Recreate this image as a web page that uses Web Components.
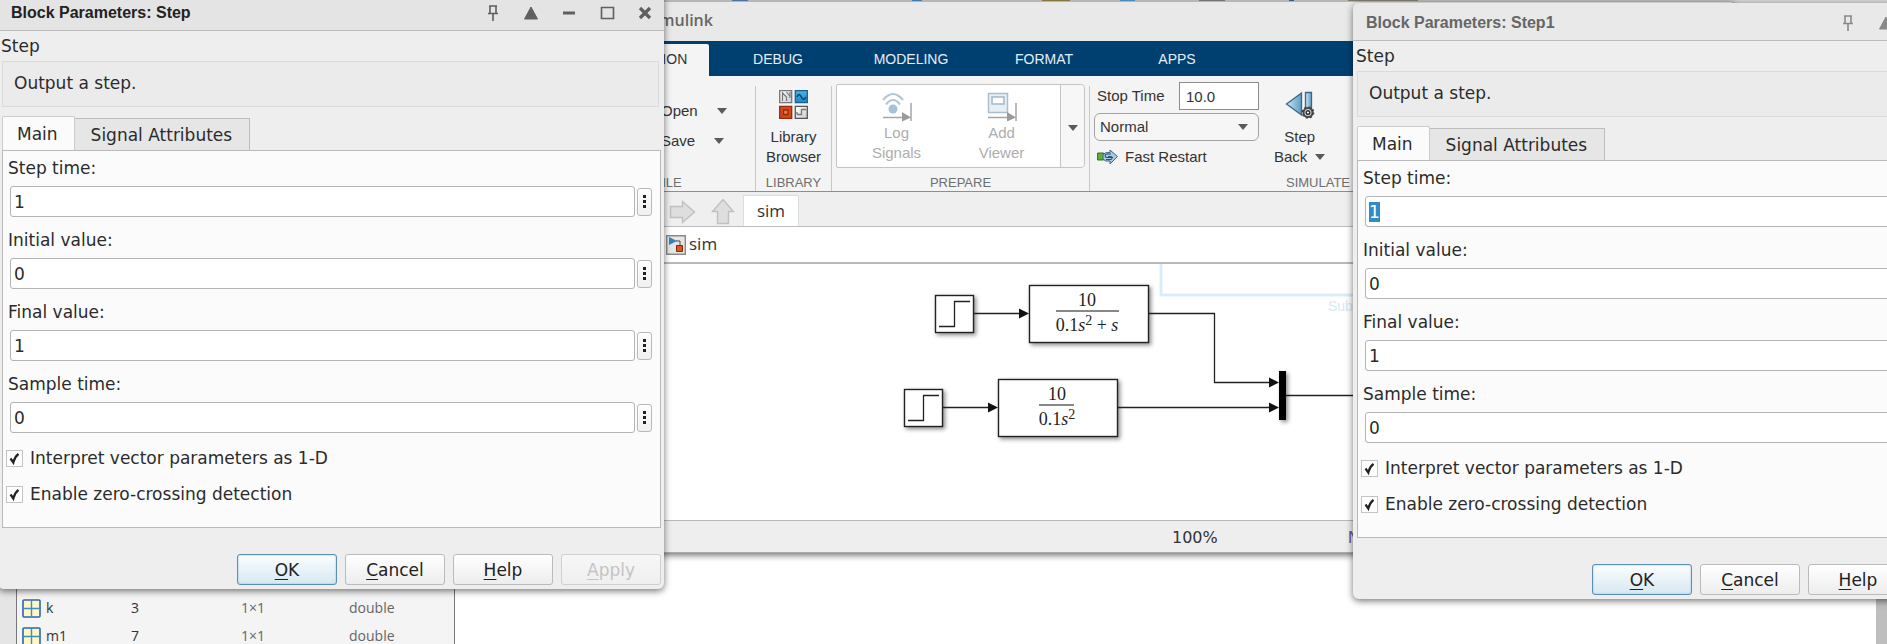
<!DOCTYPE html>
<html lang="en">
<head>
<meta charset="utf-8">
<title>Simulink desktop</title>
<style>
html, body { margin: 0; height: 100%; overflow: hidden; background: #fff; }
</style>
</head>
<body>
<desk-top>
  <matlab-base slot="base"></matlab-base>
  <simulink-window></simulink-window>
  <block-dialog class="left" heading="Block Parameters: Step" active></block-dialog>
  <block-dialog class="right" heading="Block Parameters: Step1" select-first></block-dialog>
</desk-top>

<script>
function define(name, html, setup) {
  const tpl = document.createElement('template');
  tpl.innerHTML = html;
  customElements.define(name, class extends HTMLElement {
    constructor() {
      super();
      this.attachShadow({ mode: 'open' }).append(tpl.content.cloneNode(true));
    }
    connectedCallback() { if (setup) setup(this, this.shadowRoot); }
  });
}

/* ---------- parts of the parameter dialog ---------- */

define('param-field', `
<style>
  :host { display: block; margin-bottom: 11px; }
  label { display: block; height: 30px; line-height: 24px; padding-left: 5px; }
  .row { display: flex; align-items: center; gap: 2px; padding: 0 8px 0 7px; }
  input { flex: 1; min-width: 0; height: 31px; box-sizing: border-box; border: 1px solid #b4b4b4; border-radius: 3px;
    padding: 0 3px; background: #fff; font: inherit; color: inherit; outline: none; }
  input::selection { background: #308cc6; color: #fff; }
  button { width: 15px; height: 28px; padding: 0; border: 1px solid #b9b9b9; border-radius: 3px;
    background: linear-gradient(#fdfdfd, #f0f0f0); display: grid; place-items: center; }
</style>
<label for="v"></label>
<div class="row">
  <input id="v" type="text">
  <button type="button" aria-label="More options"><svg width="3" height="13" viewBox="0 0 3 13"><path d="M0 0h3v3H0zM0 5h3v3H0zM0 10h3v3H0z" fill="#222"/></svg></button>
</div>`, (host, root) => {
  root.querySelector('label').textContent = host.getAttribute('label');
  root.querySelector('input').value = host.getAttribute('value');
});

define('param-check', `
<style>
  :host { display: block; height: 36px; }
  label { display: flex; align-items: center; gap: 7px; height: 24px; padding-left: 3px; }
  input { appearance: none; margin: 0; width: 17px; height: 17px; box-sizing: border-box; border: 1px solid #c4c4c4; background: #fff; }
  input:checked { background: #fff url('data:image/svg+xml,<svg xmlns="http://www.w3.org/2000/svg" viewBox="0 0 15 15"><path d="M3.5 7.5 6.3 11.5Q7.5 6 11.5 2.8" fill="none" stroke="%23222" stroke-width="2.2"/></svg>') center / 15px 15px no-repeat; }
</style>
<label><input type="checkbox" checked><slot></slot></label>`);

define('push-button', `
<style>
  :host { display: block; }
  button { width: 100px; height: 31px; padding: 0; border: 1px solid #bbb; border-radius: 3px; font: inherit; color: #222;
    background: linear-gradient(#fff, #ededed); text-underline-offset: 3px; }
  :host([default]) button { border-color: #5b8fb5; background: linear-gradient(#fbfdfe, #d7e8f2); box-shadow: inset 0 0 2px #8bb9d8; }
  :host([disabled]) button { border-color: #d0d0d0; color: #c4c4c4; background: linear-gradient(#f7f7f7, #efefef); }
</style>
<button type="button"><slot></slot></button>`, (host, root) => {
  if (host.hasAttribute('disabled')) root.querySelector('button').disabled = true;
});

define('title-bar', `
<style>
  :host { display: flex; align-items: center; height: 38px; box-sizing: border-box; border-bottom: 1px solid #bcbcbc;
    background: #e9e9e9; border-radius: 6px 6px 0 0; color: #666; --glyph: #8a8a8a;
    font: bold 16px/20px "Liberation Sans", Arial, sans-serif; }
  :host([active]) { background: #e4e4e4; color: #222; --glyph: #5f5f5f; }
  .t { flex: 1; padding: 2px 0 0 13px; white-space: nowrap; }
  button { width: 38px; height: 30px; padding: 2px 0 0; border: 0; background: none; color: var(--glyph); display: grid; place-items: center; }
  svg { display: block; fill: none; stroke: currentColor; stroke-width: 2; }
</style>
<div class="t"><slot></slot></div>
<button aria-label="Pin"><svg width="18" height="18"><path d="M5 2h8M6 2v7M12 2v7M4 9.500h10M9 10v7" stroke-width="1.600"/></svg></button>
<button aria-label="Shade"><svg width="18" height="18"><path d="M9 3 15.5 15h-13z" fill="currentColor" stroke-width="1"/></svg></button>
<button aria-label="Minimize"><svg width="18" height="18"><path d="M3 9h12" stroke-width="3"/></svg></button>
<button aria-label="Maximize"><svg width="18" height="18"><path d="M3.5 3.5h12v11h-12z" stroke-width="1.600"/></svg></button>
<button aria-label="Close"><svg width="18" height="18"><path d="m4 4 10 10M14 4 4 14" stroke-width="3.200"/></svg></button>`);

define('block-dialog', `
<style>
  :host { display: flex; flex-direction: column; width: 666px; border-radius: 6px; background: #eee; color: #2b2b2b;
    font: 17px/20px "DejaVu Sans", Verdana, sans-serif; box-shadow: 0 2px 7px rgba(0,0,0,.55); }
  .kind { height: 30px; line-height: 30px; padding-left: 3px; }
  .info { margin: 0 5px 0 4px; height: 44px; line-height: 43px; padding-left: 11px; border: 1px solid #dadada; background: #ebebeb; }
  .tabs { display: flex; align-items: flex-end; margin: 9px 0 0 4px; height: 34px; }
  .tabs button { height: 32px; padding: 0 17px 0 16px; border: 1px solid #bdbdbd; border-bottom: 0; border-left: 0; background: #e6e6e6; font: inherit; color: inherit; }
  .tabs button.on { height: 35px; padding: 0 16px 0 14px; margin-bottom: -1px; border-color: #ccc; border-left: 1px solid #ccc; background: #fbfbfb; border-radius: 2px 2px 0 0; }
  .panel { margin: 0 3px 0 4px; border: 1px solid #b9b9b9; background: #fbfbfb; padding: 5px 0 9px; }
  .checks { padding-top: 2px; }
  .foot { display: flex; justify-content: flex-end; gap: 8px; padding: 26px 3px 4px 0; }
</style>
<title-bar></title-bar>
<div class="kind">Step</div>
<div class="info">Output a step.</div>
<div class="tabs" role="tablist">
  <button class="on" role="tab">Main</button><button role="tab">Signal Attributes</button>
</div>
<div class="panel">
  <param-field label="Step time:" value="1"></param-field>
  <param-field label="Initial value:" value="0"></param-field>
  <param-field label="Final value:" value="1"></param-field>
  <param-field label="Sample time:" value="0"></param-field>
  <div class="checks">
    <param-check>Interpret vector parameters as 1-D</param-check>
    <param-check>Enable zero-crossing detection</param-check>
  </div>
</div>
<div class="foot">
  <push-button default><u>O</u>K</push-button>
  <push-button><u>C</u>ancel</push-button>
  <push-button><u>H</u>elp</push-button>
  <push-button disabled><u>A</u>pply</push-button>
</div>`, (host, root) => {
  const bar = root.querySelector('title-bar');
  bar.textContent = host.getAttribute('heading');
  bar.toggleAttribute('active', host.hasAttribute('active'));
  if (host.hasAttribute('select-first')) {
    const input = root.querySelector('param-field').shadowRoot.querySelector('input');
    input.focus({ preventScroll: true });
    input.select();
  }
});

/* ---------- parts of the Simulink window ---------- */

define('ribbon-tab', `
<style>
  :host { display: block; width: 128px; }
  button { display: block; width: 100%; height: 35px; padding: 0; border: 0; background: none; color: #e6eef5;
    font: 14px/16px "Liberation Sans", Arial, sans-serif; }
  :host([on]) button { background: #f4f4f4; color: #333; height: 32px; margin-top: 3px; border-radius: 2px 2px 0 0; padding-bottom: 3px; }
</style>
<button type="button"><slot></slot></button>`);

define('ribbon-group', `
<style>
  :host { display: flex; flex-direction: column; box-sizing: border-box; padding: 0 5px; border-left: 1px solid #c8c8c8; }
  .body { flex: 1; }
  .name { height: 18px; text-align: center; font-size: 13px; line-height: 20px; color: #6e6e6e; }
</style>
<div class="body"><slot></slot></div>
<div class="name"></div>`, (host, root) => {
  root.querySelector('.name').textContent = host.getAttribute('name');
});

define('tool-button', `
<style>
  :host { display: block; }
  button { display: flex; flex-direction: column; align-items: center; gap: 8px; padding: 0; border: 0; background: none;
    font: inherit; color: #333; white-space: nowrap; text-align: center; width: 100%; }
  :host([off]) button { color: #adadad; gap: 1px; }
</style>
<button type="button"><slot name="icon"></slot><span><slot></slot></span></button>`);

const caret = '<svg class="caret" width="10" height="6" viewBox="0 0 10 6"><path d="M0 0h10L5 6z" fill="#5a5a5a"/></svg>';

define('model-canvas', `
<style>
  :host { display: block; height: 256px; background: #fff; overflow: hidden; }
  svg { display: block; width: 100%; height: 256px; }
  .b { fill: #fff; stroke: #222; stroke-width: 1.4; filter: drop-shadow(2px 2px 2px rgba(0,0,0,.45)); }
  .w { fill: none; stroke: #222; stroke-width: 1.3; }
  text { font: 18px "Liberation Serif", "Times New Roman", serif; fill: #222; text-anchor: middle; }
  .i { font-style: italic; }
  .sup { font-size: 14px; }
</style>
<svg role="img" aria-label="Model">
 <g transform="translate(-560 -264)">
  <path d="M1161 262v33h300" fill="none" stroke="#d9edf9" stroke-width="3"/>
  <text x="1328" y="311" style="font:14px 'Liberation Sans',sans-serif;fill:#d6e9f6;text-anchor:start">Sub</text>
  <rect class="b" x="935.5" y="295.5" width="38" height="37"/>
  <path class="w" d="M939 326.500h15.500v-25H970"/>
  <rect class="b" x="1029.500" y="285.500" width="119" height="57"/>
  <rect class="b" x="904.500" y="389.500" width="38" height="37"/>
  <path class="w" d="M908 420.500h15.500v-25H939"/>
  <rect class="b" x="998.500" y="379.500" width="119" height="57"/>
  <path class="w" d="M974 313.500h46M1149 313.500h65.500v69H1270M943 407.500h46M1118 407.500h152M1286 395.500h80"/>
  <path d="m1019 308.500 10 5-10 5zM1269 377.500l10 5-10 5zM988 402.500l10 5-10 5zM1269 402.500l10 5-10 5z" fill="#111"/>
  <rect x="1279" y="371" width="7" height="49" style="filter:drop-shadow(2px 2px 2px rgba(0,0,0,.45))"/>
  <path d="M1056 311h63M1039 405h35" stroke="#888" stroke-width="2"/>
  <text x="1087" y="306">10</text>
  <text x="1087" y="331">0.1<tspan class="i">s</tspan><tspan class="sup" dy="-6">2</tspan><tspan dy="6"> + </tspan><tspan class="i">s</tspan></text>
  <text x="1057" y="400">10</text>
  <text x="1057" y="425">0.1<tspan class="i">s</tspan><tspan class="sup" dy="-6">2</tspan></text>
 </g>
</svg>`);

define('simulink-window', `
<style>
  :host { display: block; background: #efefef; color: #333; border-top: 1px solid #b5b5b5; border-radius: 0 6px 0 0;
    font: 15px/20px "Liberation Sans", Arial, sans-serif; box-shadow: 0 2px 7px rgba(0,0,0,.6); }
  .title { height: 39px; line-height: 36px; padding-left: 86px; background: #e9e9e9; border-radius: 0 6px 0 0; color: #666;
    font-family: "Open Sans", "Noto Sans", sans-serif; font-weight: 600; font-size: 16px; }
  .tabs { display: flex; gap: 5px; height: 35px; padding-left: 21px; background: #004070; }
  .ribbon { display: flex; height: 115px; background: #f4f4f4; border-bottom: 1px solid #8e8e8e; padding-left: 21px; }
  ribbon-group { margin-top: 10px; }
  .file { width: 174px; border: 0; }
  .lib { width: 76px; }
  .prep { width: 258px; }
  .sim { width: 458px; }
  .menu { display: flex; align-items: center; gap: 19px; height: 30px; padding: 0 0 0 75px; margin: 0; border: 0; background: none; font: inherit; color: inherit; }
  .file .menu:first-child { margin-top: 10px; }
  .lib tool-button { padding-top: 4px; }
  .gallery { display: flex; height: 82px; margin: -2px 0 0 -1px; width: 247px; border: 1px solid #c4c4c4; border-radius: 2px 4px 4px 2px; background: #fff; }
  .gallery tool-button { width: 105px; padding-top: 7px; }
  .gallery tool-button:first-child { margin-left: 7px; }
  .more { margin: 0 0 0 auto; width: 24px; padding: 0; border: 0; border-left: 1px solid #c4c4c4; background: #f7f7f7; border-radius: 0 4px 4px 0; }
  .sim { padding-left: 4px; }
  .simrow { display: flex; gap: 15px; }
  .opts { display: grid; grid-template-columns: 85px 80px; row-gap: 3px; margin-top: -4px; }
  .opts label { padding-left: 3px; line-height: 28px; }
  .opts input { height: 28px; box-sizing: border-box; border: 1px solid #8c8c8c; padding: 0 6px; background: #fff; font: inherit; color: inherit; min-width: 0; width: 80px; }
  .sel { grid-column: 1 / 3; display: grid; align-items: center; }
  .sel > * { grid-area: 1 / 1; }
  .sel svg { justify-self: end; margin-right: 11px; pointer-events: none; }
  select { appearance: none; height: 28px; border: 1px solid #a2a2a2; border-radius: 6px; background: #f6f6f6; padding: 0 5px; font: inherit; color: inherit; }
  .fast { grid-column: 1 / 3; display: flex; align-items: center; gap: 7px; padding: 0 0 0 3px; border: 0; background: none; font: inherit; color: inherit; height: 26px; }
  .back { padding-top: 5px; }
  .back .caret { margin-left: 8px; vertical-align: 2px; }
  .nav { display: flex; align-items: flex-end; height: 34px; padding-left: 109px; background: #efefef; border-bottom: 1px solid #bdbdbd; }
  .nav svg { margin-right: 14px; }
  .nav svg + svg { margin-right: 8px; }
  .nav .doc { width: 56px; height: 31px; padding: 0; border: 1px solid #ddd; border-bottom: 0; background: #fff; color: #333; }
  .doc, .crumb { font: 17px/20px "Open Sans", "Noto Sans", sans-serif; }
  .crumb { display: flex; align-items: center; gap: 3px; height: 35px; padding-left: 106px; background: #fff; border-bottom: 2px solid #b9b9b9; }
  .crumb span { padding-bottom: 2px; }
  .status { display: flex; height: 31px; border-top: 1px solid #b9b9b9; border-bottom: 1px solid #aaa; background: #eee; padding-left: 612px;
    font: 16px/34px "DejaVu Sans", sans-serif; gap: 130px; }
  .status .mode { color: #6a5aa0; }
</style>
<div class="title">Simulink</div>
<div class="tabs">
  <ribbon-tab on>SIMULATION</ribbon-tab><ribbon-tab>DEBUG</ribbon-tab><ribbon-tab>MODELING</ribbon-tab><ribbon-tab>FORMAT</ribbon-tab><ribbon-tab>APPS</ribbon-tab>
</div>
<div class="ribbon">
  <ribbon-group class="file" name="FILE">
    <button class="menu">Open ${caret}</button>
    <button class="menu">Save ${caret}</button>
  </ribbon-group>
  <ribbon-group class="lib" name="LIBRARY">
    <tool-button>
      <svg slot="icon" width="29" height="29" viewBox="0 0 29 29">
        <defs><linearGradient id="s" x2="1" y2="1"><stop stop-color="#fff"/><stop offset="1" stop-color="#c9ccd2"/></linearGradient>
        <linearGradient id="bl" y2="1" x2="0"><stop stop-color="#4db4e6"/><stop offset="1" stop-color="#1787c4"/></linearGradient></defs>
        <path d="M.7.700h12v12H.7z" fill="url(#s)" stroke="#777" stroke-width="1.300"/>
        <path d="M3.500 2v9M3.500 3l4 4v4M7.500 2l4 5M11 2v6" fill="none" stroke="#777" stroke-width="1.200"/>
        <path d="M16.300.700h12v12h-12z" fill="url(#bl)" stroke="#17618e" stroke-width="1.300"/>
        <path d="M18 7q2-5 4.300 0t4.500 0" fill="none" stroke="#0d3d63" stroke-width="1.400"/>
        <path d="M.7 16.300h12v12H.7z" fill="#d9461b" stroke="#8e2c10" stroke-width="1.300"/>
        <path d="M4.500 20h4.500v4.500H4.500z" fill="#f3793f" stroke="#8e2c10" stroke-width="1.300"/>
        <path d="M16.300 16.300h12v12h-12z" fill="url(#s)" stroke="#555" stroke-width="1.300"/>
        <path d="M18 24.500h4.500v-5H27M18 22v2.500" fill="none" stroke="#777" stroke-width="1.300"/>
      </svg>Library<br>Browser</tool-button>
  </ribbon-group>
  <ribbon-group class="prep" name="PREPARE">
    <div class="gallery">
      <tool-button off>
        <svg slot="icon" width="30" height="30" viewBox="0 0 30 30"><g fill="none" stroke="#b3c7d4" stroke-width="2.200"><path d="M1 8Q11-4 21 8M4 12.500Q11 3.500 18 12.500"/></g><circle cx="11" cy="17" r="4.500" fill="#a4c3d8"/><path d="M1 25.500h20M29 11v18" stroke="#a5a5a5" stroke-width="1.500"/><path d="m20 20 9 5.500-9 4z" fill="#9b9b9b"/></svg>Log<br>Signals</tool-button>
      <tool-button off>
        <svg slot="icon" width="30" height="30" viewBox="0 0 30 30"><path d="M1.500 1.500h19v19h-19z" fill="#e8eff4" stroke="#a9bfd0" stroke-width="1.500"/><path d="M5 5h12v7H5z" fill="#fff" stroke="#9cb9cf" stroke-width="1.500"/><path d="M1 25.500h20M29 11v18" stroke="#a5a5a5" stroke-width="1.500"/><path d="m20 20 9 5.500-9 4z" fill="#9b9b9b"/></svg>Add<br>Viewer</tool-button>
      <button class="more" aria-label="More">${caret}</button>
    </div>
  </ribbon-group>
  <ribbon-group class="sim" name="SIMULATE">
    <div class="simrow">
      <div class="opts">
        <label for="stop">Stop Time</label><input id="stop" value="10.0">
        <div class="sel"><select aria-label="Simulation mode"><option>Normal</option></select>${caret}</div>
        <button class="fast"><svg width="21" height="16" viewBox="0 0 21 16"><path d="M.6 4h6v7h-6z" fill="#62b03c" stroke="#2f6b1f"/><path d="M6 5.500Q8 3 13 3.500V1l7.500 6.500L13 15v-3Q8 13 6 10z" fill="#a9c9e0" stroke="#3f6580"/><path d="M16 8.500H9.500a1.800 1.800 0 0 1 0-3.500H14M9 10.500h4.500a1.500 1.500 0 0 0 0-3H11" fill="none" stroke="#2c5472" stroke-width="1.100"/></svg>Fast Restart</button>
      </div>
      <tool-button class="back">
        <svg slot="icon" width="30" height="28" viewBox="0 0 30 28"><defs><linearGradient id="g" x2="1"><stop stop-color="#cfe5f3"/><stop offset="1" stop-color="#5f9cc4"/></linearGradient></defs><path d="M16.500 2v22L1.500 13z" fill="url(#g)" stroke="#38678a" stroke-width="1.300"/><path d="M20.500 1.500h6V20h-6z" fill="url(#g)" stroke="#38678a" stroke-width="1.300"/><circle cx="23" cy="21.500" r="4.500" fill="#ddd" stroke="#444" stroke-width="2"/><circle cx="23" cy="21.500" r="5.600" fill="none" stroke="#444" stroke-width="1.500" stroke-dasharray="2 2.400"/><circle cx="23" cy="21.500" r="1.800" fill="#fff" stroke="#333" stroke-width="1.500"/></svg>Step<br>Back${caret}</tool-button>
    </div>
  </ribbon-group>
</div>
<div class="nav">
  <svg width="28" height="27" viewBox="0 0 28 27"><path d="M1.500 7.500h12v-5L25.500 13 13.500 23.500v-5h-12z" fill="#dedede" stroke="#c0c0c0" stroke-width="1.400"/></svg>
  <svg width="24" height="27" viewBox="0 0 24 27"><path d="M6.500 24.500v-12h-5L12 .5l10.500 12h-5v12z" fill="#dedede" stroke="#c0c0c0" stroke-width="1.400"/></svg>
  <button class="doc">sim</button>
</div>
<div class="crumb"><svg width="20" height="20" viewBox="0 0 20 20"><path d="M.7.700h18.600v18.600H.7z" fill="#e6e6e6" stroke="#8a8a8a" stroke-width="1.400"/><path d="m3 2 8 4-8 4z" fill="#2e86b9"/><path d="M10 6h4v5" fill="none" stroke="#444"/><path d="M10.500 10.500h6v6h-6z" fill="#dd5526" stroke="#84290f"/></svg><span>sim</span></div>
<model-canvas></model-canvas>
<div class="status"><span>100%</span><span class="mode">N</span></div>`);

/* ---------- MATLAB window behind everything ---------- */

define('matlab-base', `
<style>
  :host { display: grid; height: 100%; grid-template-columns: 16px 439px 1fr 11px; grid-template-rows: 3px 1fr; background: #fff;
    font: 14px/20px "Open Sans", "Noto Sans", sans-serif; color: #333; }
  .edge { background: #e5e5e5; }
  .ws { border: solid #777; border-width: 0 1px; background: #f4f4f4; padding-top: 591px; }
  .bar { background: #bebebe; }
  table { border-collapse: collapse; table-layout: fixed; width: 100%; }
  td { height: 28px; padding: 0; }
  td:nth-child(n+3) { color: #666; }
  .n { display: flex; align-items: center; gap: 5px; padding-left: 5px; }
  .top { grid-column: 1 / 5; display: flex; gap: 2px; background: #d8d8d8; padding-left: 732px; }
  .top i { height: 1px; }
</style>
<div class="top"><i style="width:16px;background:#5f86bd"></i><i style="width:160px"></i><i style="width:10px;background:#4f93c9"></i><i style="width:116px"></i><i style="width:28px;background:#a08a4a"></i><i style="width:46px"></i><i style="width:15px;background:#5da2d8"></i><i style="width:60px"></i><i style="width:26px;background:#888"></i><i style="width:60px"></i><i style="width:5px;background:#3a6db0"></i><i style="width:50px"></i><i style="width:70px;background:#99907f"></i></div>
<div class="edge"></div>
<div class="ws"><table>
  <colgroup><col style="width:114px"><col style="width:110px"><col style="width:108px"><col></colgroup>
  <tr><td><span class="n"><svg width="19" height="19" viewBox="0 0 19 19"><rect x="1" y="1" width="17" height="17" rx="1" fill="#fff6c4" stroke="#2b66b1" stroke-width="1.600"/><path d="M9.500 1v17M1 9.500h17" stroke="#3c8fc0" stroke-width="1.400"/></svg>k</span></td><td>3</td><td>1×1</td><td>double</td></tr>
  <tr><td><span class="n"><svg width="19" height="19" viewBox="0 0 19 19"><rect x="1" y="1" width="17" height="17" rx="1" fill="#fff6c4" stroke="#2b66b1" stroke-width="1.600"/><path d="M9.500 1v17M1 9.500h17" stroke="#3c8fc0" stroke-width="1.400"/></svg>m1</span></td><td>7</td><td>1×1</td><td>double</td></tr>
</table></div>
<div></div>
<div class="bar"></div>`);

/* Windows lie freely over the base, each at its own place on the desktop. */
define('desk-top', `
<style>
  :host { display: block; position: relative; height: 100vh; overflow: hidden; }
  ::slotted(simulink-window) { position: absolute; top: 1px; left: 560px; width: 1175px; }
  ::slotted(.left) { position: absolute; top: -7px; left: -2px; }
  ::slotted(.right) { position: absolute; top: 3px; left: 1353px; }
</style>
<slot name="base"></slot>
<slot></slot>`);
</script>
</body>
</html>
